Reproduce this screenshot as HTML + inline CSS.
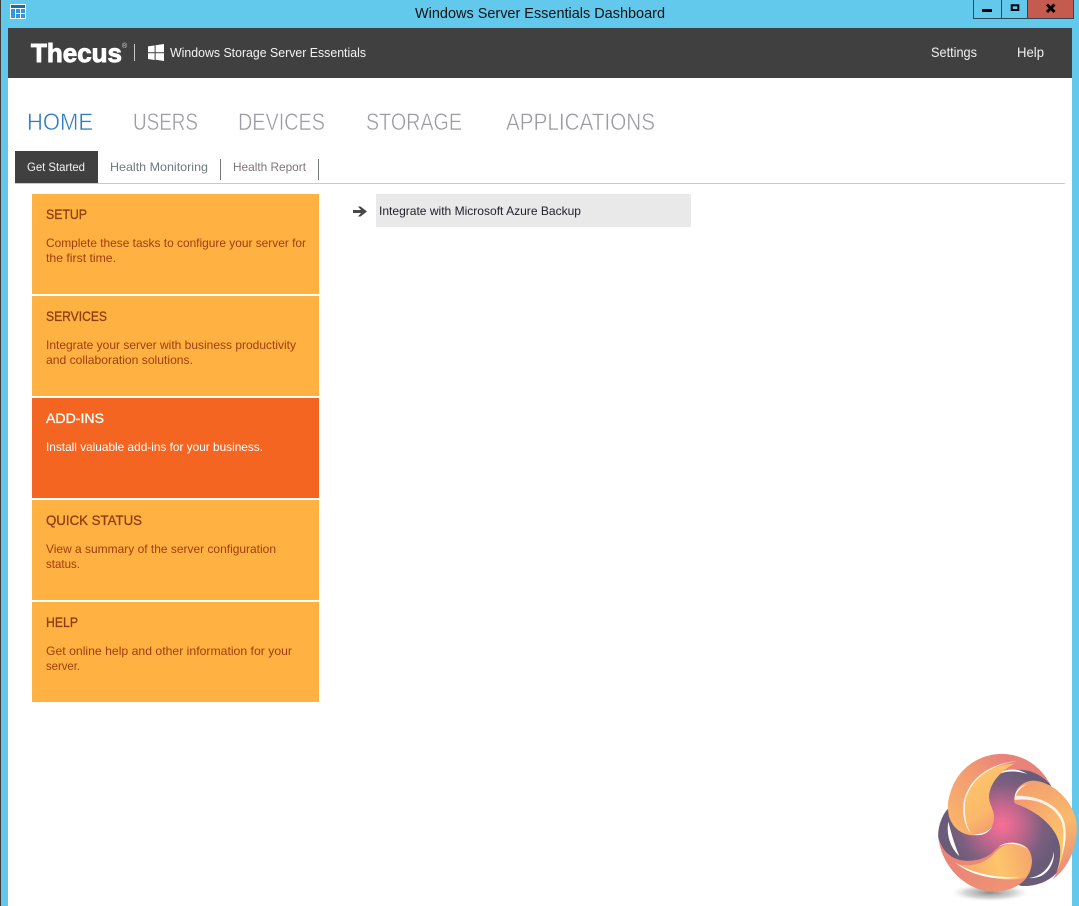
<!DOCTYPE html>
<html lang="en">
<head>
<meta charset="utf-8">
<title>Windows Server Essentials Dashboard</title>
<style>
html,body{margin:0;padding:0;width:1079px;height:906px;overflow:hidden;background:#62c9ec}
svg{position:absolute;left:0;top:0;display:block}
text{font-family:"Liberation Sans",sans-serif;white-space:pre}
.n{font-size:24px;stroke:#fff;stroke-width:.45px}
.t{font-size:14px;stroke-width:.3px}
.o{fill:#8f3c0e;stroke:#8f3c0e}
</style>
</head>
<body>
<svg width="1079" height="906" viewBox="0 0 1079 906" xmlns="http://www.w3.org/2000/svg">
<defs>
<radialGradient id="core" cx="245" cy="255" r="165" gradientUnits="userSpaceOnUse">
<stop offset="0" stop-color="#fa6f96"/><stop offset=".4" stop-color="#c0668c"/><stop offset=".75" stop-color="#7d5f80"/><stop offset="1" stop-color="#6a5c78"/>
</radialGradient>
<linearGradient id="b1" x1="135" y1="120" x2="230" y2="260" gradientUnits="userSpaceOnUse">
<stop offset="0" stop-color="#fcc469"/><stop offset=".65" stop-color="#fbb96b"/><stop offset="1" stop-color="#f39a70"/>
</linearGradient>
<linearGradient id="r1" x1="90" y1="240" x2="260" y2="60" gradientUnits="userSpaceOnUse">
<stop offset="0" stop-color="#f9b46b"/><stop offset=".6" stop-color="#f29a72"/><stop offset="1" stop-color="#e9827b"/>
</linearGradient>
<linearGradient id="b2" x1="300" y1="150" x2="450" y2="300" gradientUnits="userSpaceOnUse">
<stop offset="0" stop-color="#f39372"/><stop offset=".55" stop-color="#fab46c"/><stop offset="1" stop-color="#fdc76a"/>
</linearGradient>
<linearGradient id="r2" x1="340" y1="120" x2="430" y2="420" gradientUnits="userSpaceOnUse">
<stop offset="0" stop-color="#f3a06f"/><stop offset=".45" stop-color="#f9ba6b"/><stop offset="1" stop-color="#e8857a"/>
</linearGradient>
<linearGradient id="b3" x1="120" y1="390" x2="330" y2="340" gradientUnits="userSpaceOnUse">
<stop offset="0" stop-color="#f7a96e"/><stop offset=".55" stop-color="#fdc56a"/><stop offset="1" stop-color="#f6a66e"/>
</linearGradient>
<linearGradient id="r3" x1="60" y1="300" x2="240" y2="455" gradientUnits="userSpaceOnUse">
<stop offset="0" stop-color="#e9807a"/><stop offset="1" stop-color="#ef9273"/>
</linearGradient>
<radialGradient id="sh" cx=".5" cy=".5" r=".5">
<stop offset="0" stop-color="#8c8c8c"/><stop offset=".6" stop-color="#c4c4c4" stop-opacity=".7"/><stop offset="1" stop-color="#fff" stop-opacity="0"/>
</radialGradient>
</defs>

<!-- window frame -->
<rect x="0" y="0" width="1079" height="906" fill="#62c9ec"/>
<rect x="0" y="0" width="1" height="906" fill="#3e3e3e"/>
<rect x="8" y="28" width="1064" height="50" fill="#404040"/>
<rect x="8" y="78" width="1064" height="828" fill="#fff"/>

<!-- title bar icon -->
<rect x="10" y="4" width="16" height="15" fill="#fff"/>
<rect x="11" y="5" width="14" height="3" fill="#0f6fb8"/>
<rect x="11" y="9" width="4" height="9" fill="#2f98e6"/>
<rect x="16" y="9" width="4" height="4" fill="#2f98e6"/>
<rect x="21" y="9" width="4" height="4" fill="#2f98e6"/>
<rect x="16" y="14" width="4" height="4" fill="#2f98e6"/>
<rect x="21" y="14" width="4" height="4" fill="#2f98e6"/>
<text x="415" y="18" font-size="14.5" fill="#111" textLength="250" lengthAdjust="spacingAndGlyphs">Windows Server Essentials Dashboard</text>

<!-- window controls -->
<rect x="1027" y="0" width="46.5" height="18" fill="#c55a4f"/>
<path d="M973.5 0V18.5H1073.5V0M1001.5 0V18.5M1027.5 0V18.5" fill="none" stroke="#2f4654" stroke-width="1"/>
<rect x="982" y="9" width="10" height="3" fill="#000"/>
<rect x="1011.7" y="5.3" width="6.6" height="4.7" fill="none" stroke="#000" stroke-width="2"/>
<path d="M1047 4.5L1054.5 12M1054.5 4.5L1047 12" stroke="#000" stroke-width="3" fill="none"/>

<!-- header -->
<text x="31" y="62" font-size="26" font-weight="700" fill="#fff" stroke="#fff" stroke-width=".9" textLength="91" lengthAdjust="spacingAndGlyphs">Thecus</text>
<text x="122" y="48" font-size="7" fill="#ddd">®</text>
<rect x="134" y="44" width="1" height="17" fill="#c8c8c8"/>
<path d="M148 46.4L154.6 45.4V52.2H148ZM155.6 45.2L164 44V52.2H155.6ZM148 53.2H154.6V60L148 59ZM155.6 53.2H164V61L155.6 59.8Z" fill="#fff"/>
<text x="170" y="57" font-size="13" fill="#f4f4f4" textLength="196" lengthAdjust="spacingAndGlyphs">Windows Storage Server Essentials</text>
<text x="931" y="57" font-size="14" fill="#f0f0f0" textLength="46" lengthAdjust="spacingAndGlyphs">Settings</text>
<text x="1017" y="57" font-size="14" fill="#f0f0f0" textLength="27" lengthAdjust="spacingAndGlyphs">Help</text>

<!-- main nav -->
<text class="n" x="27" y="130" fill="#2f7cc4" textLength="66" lengthAdjust="spacingAndGlyphs">HOME</text>
<text class="n" x="133" y="130" fill="#9c9ca2" textLength="65" lengthAdjust="spacingAndGlyphs">USERS</text>
<text class="n" x="238" y="130" fill="#9c9ca2" textLength="87" lengthAdjust="spacingAndGlyphs">DEVICES</text>
<text class="n" x="366" y="130" fill="#9c9ca2" textLength="96" lengthAdjust="spacingAndGlyphs">STORAGE</text>
<text class="n" x="506" y="130" fill="#9c9ca2" textLength="149" lengthAdjust="spacingAndGlyphs">APPLICATIONS</text>

<!-- tabs -->
<rect x="15" y="151" width="83" height="32" fill="#404040"/>
<rect x="15" y="183" width="1050" height="1" fill="#c9c9c9"/>
<text x="27" y="171" font-size="12" fill="#f2f2f2" textLength="58" lengthAdjust="spacingAndGlyphs">Get Started</text>
<text x="110" y="171" font-size="12" fill="#707a7c" textLength="98" lengthAdjust="spacingAndGlyphs">Health Monitoring</text>
<text x="233" y="171" font-size="12" fill="#80757a" textLength="73" lengthAdjust="spacingAndGlyphs">Health Report</text>
<rect x="220" y="159" width="1" height="21" fill="#777"/>
<rect x="318" y="159" width="1" height="21" fill="#777"/>

<!-- cards -->
<rect x="32" y="194" width="287" height="100" fill="#ffb142"/>
<text class="t o" x="46" y="219" textLength="41" lengthAdjust="spacingAndGlyphs">SETUP</text>
<text x="46" y="247" font-size="12" fill="#a23d0e" textLength="260" lengthAdjust="spacingAndGlyphs">Complete these tasks to configure your server for</text>
<text x="46" y="262" font-size="12" fill="#a23d0e" textLength="70" lengthAdjust="spacingAndGlyphs">the first time.</text>

<rect x="32" y="296" width="287" height="100" fill="#ffb142"/>
<text class="t o" x="46" y="321" textLength="61" lengthAdjust="spacingAndGlyphs">SERVICES</text>
<text x="46" y="349" font-size="12" fill="#a23d0e" textLength="250" lengthAdjust="spacingAndGlyphs">Integrate your server with business productivity</text>
<text x="46" y="364" font-size="12" fill="#a23d0e" textLength="147" lengthAdjust="spacingAndGlyphs">and collaboration solutions.</text>

<rect x="32" y="398" width="287" height="100" fill="#f56522"/>
<text class="t" x="46" y="423" fill="#fff" stroke="#fff" textLength="58" lengthAdjust="spacingAndGlyphs">ADD-INS</text>
<text x="46" y="451" font-size="12" fill="#fff" textLength="217" lengthAdjust="spacingAndGlyphs">Install valuable add-ins for your business.</text>

<rect x="32" y="500" width="287" height="100" fill="#ffb142"/>
<text class="t o" x="46" y="525" textLength="96" lengthAdjust="spacingAndGlyphs">QUICK STATUS</text>
<text x="46" y="553" font-size="12" fill="#a23d0e" textLength="230" lengthAdjust="spacingAndGlyphs">View a summary of the server configuration</text>
<text x="46" y="568" font-size="12" fill="#a23d0e" textLength="34" lengthAdjust="spacingAndGlyphs">status.</text>

<rect x="32" y="602" width="287" height="100" fill="#ffb142"/>
<text class="t o" x="46" y="627" textLength="32" lengthAdjust="spacingAndGlyphs">HELP</text>
<text x="46" y="655" font-size="12" fill="#a23d0e" textLength="246" lengthAdjust="spacingAndGlyphs">Get online help and other information for your</text>
<text x="46" y="670" font-size="12" fill="#a23d0e" textLength="34" lengthAdjust="spacingAndGlyphs">server.</text>

<!-- task row -->
<path d="M353 210H361L358 206.5H360.5L367 211.5L360.5 216.5H358L361 213H353Z" fill="#484848"/>
<rect x="376" y="194" width="315" height="33" fill="#e9e9e9"/>
<text x="379" y="215" font-size="12" fill="#24202c" textLength="202" lengthAdjust="spacingAndGlyphs">Integrate with Microsoft Azure Backup</text>

<!-- watermark logo -->
<g transform="translate(920 740) scale(.33333)">
<ellipse cx="210" cy="458" rx="125" ry="28" fill="url(#sh)"/>
<!-- dark purple swirl body -->
<path d="M85 205C65 225 52 265 55 295C75 350 110 385 170 395L305 438C345 440 395 425 420 385C445 340 430 270 400 160C395 135 385 125 385 125C350 80 300 65 250 80C180 110 110 180 85 205Z" fill="url(#core)"/>
<!-- top outer rim continuing to the right -->
<path d="M85 205A160 160 0 0 1 388 130C350 90 300 82 260 95C215 110 150 130 120 190Z" fill="url(#r1)"/>
<!-- white crescents -->
<path d="M232 102C262 84 296 84 322 102C292 92 262 92 232 102Z" fill="#fff"/>
<path d="M85 245C78 285 92 325 118 348C105 318 95 285 85 245Z" fill="#fff"/>
<path d="M328 414C368 408 394 380 402 335C404 375 378 418 328 414Z" fill="#fff"/>
<!-- blade 1 -->
<path d="M285 72C235 62 150 70 105 135C85 165 80 190 86 225C95 262 125 287 165 286C202 285 226 258 222 225C218 200 205 190 207 165C212 125 245 88 285 72Z" fill="url(#r1)"/>
<path d="M285 70C220 74 150 105 134 185C128 235 145 278 170 284C205 284 225 256 221 225C217 200 205 190 207 165C212 125 245 90 285 70Z" fill="url(#b1)"/>
<path d="M298 63C225 66 148 105 131 185C126 225 135 262 152 278C137 255 133 220 135 188C150 110 225 70 298 63Z" fill="#fff" opacity=".85"/>
<path d="M160 283C185 290 205 280 218 258C205 275 185 284 160 283Z" fill="#fff"/>
<!-- blade 2 -->
<path d="M283 185C280 150 305 123 340 122C400 125 462 185 470 250C474 320 445 385 398 418C415 395 421 365 421 330C420 280 375 222 285 190Z" fill="url(#r2)"/>
<path d="M287 172C340 165 410 195 430 250C442 290 435 345 410 395C420 370 421 345 421 330C420 280 375 222 285 190Z" fill="url(#b2)"/>
<path d="M284 180C282 155 298 138 322 132C302 142 291 156 288 167C350 167 418 190 434 250C441 285 436 320 425 345C431 310 432 280 427 252C410 197 345 172 284 180Z" fill="#fff" opacity=".85"/>
<!-- blade 3 -->
<path d="M55 290C60 350 100 420 175 447C230 465 290 450 318 415C340 385 342 345 320 322C295 300 250 305 225 330C195 365 130 372 95 350C72 335 60 315 55 290Z" fill="url(#r3)"/>
<path d="M105 368C140 385 195 375 228 335C252 308 295 303 320 322C342 345 340 385 318 412C280 425 200 425 105 368Z" fill="url(#b3)"/>
<path d="M105 368C160 412 235 422 300 412C230 414 160 402 105 368Z" fill="#fff"/>
<path d="M236 320C260 302 300 304 324 328C298 310 262 306 236 320Z" fill="#fff"/>
</g>
</svg>
</body>
</html>
